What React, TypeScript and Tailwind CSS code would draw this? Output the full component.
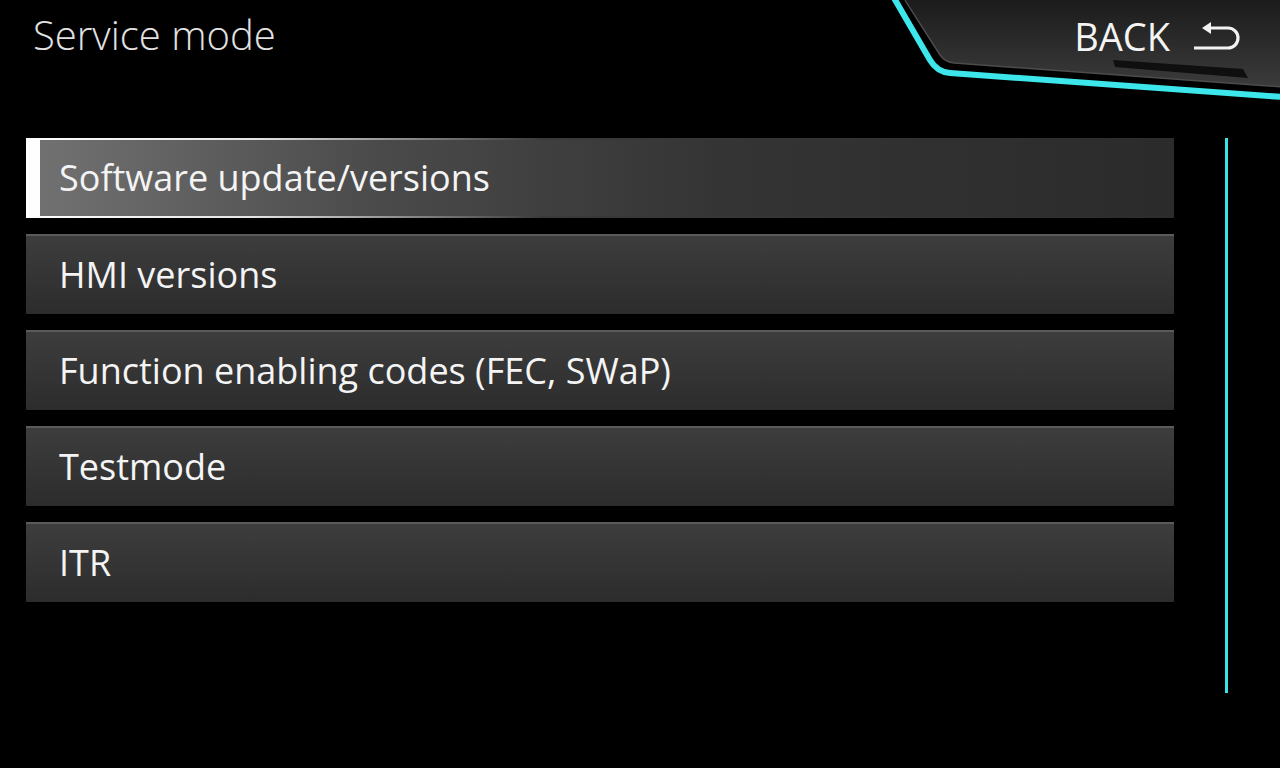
// iDrive service mode menu. Single screen, static list.
const items = [
  'Software update/versions',
  'HMI versions',
  'Function enabling codes (FEC, SWaP)',
  'Testmode',
  'ITR',
];

function BackIcon() {
  return (
    <svg width="48" height="32" viewBox="0 0 48 32" fill="none">
      <path d="M8 8 L17 2 L17 14 Z" fill="#f2f2f2" />
      <path
        d="M16 8 H34 A10 10 0 0 1 34 28 H1"
        stroke="#f2f2f2"
        strokeWidth="3.2"
        strokeLinecap="square"
      />
    </svg>
  );
}

function BackPanel() {
  return (
    <div className="relative w-[390px] h-[104px] shrink-0">
      <svg className="absolute inset-0" width="390" height="104" viewBox="0 0 390 104">
        <defs>
          <linearGradient id="panel" x1="0" y1="0" x2="0" y2="1">
            <stop offset="0" stopColor="#1b1b1b" />
            <stop offset="1" stopColor="#3b3b3b" />
          </linearGradient>
        </defs>
        <path d="M15 -2 L50 55 Q55 62 64 63 L392 87 L392 -2 Z" fill="url(#panel)" />
        <path d="M15 0 L50 55 Q55 62 64 63 L392 87" stroke="#4c4c4c" strokeWidth="1.5" fill="none" />
        <path d="M223 60 L353 69 L358 78 L225 67 Z" fill="#0f0f0f" />
        <path
          d="M4 -2 L40 60 Q47 72 60 73 L392 97"
          stroke="#3de6ea"
          strokeWidth="6"
          fill="none"
        />
      </svg>
      <div className="relative flex items-center justify-end gap-[24px] pr-[38px] pt-[13px]">
        <span className="text-[38px] leading-[46px] text-[#f4f4f4]">BACK</span>
        <BackIcon />
      </div>
    </div>
  );
}

function Row({ label, active }: { label: string; active: boolean }) {
  if (active) {
    return (
      <li className="h-[80px] pl-[14px] py-[2px] bg-[linear-gradient(to_right,#ffffff_0%,#e4e4e4_20%,#3a3a3a_45%,#2c2c2c_100%)]">
        <div className="h-full flex items-center pl-[19px] bg-[linear-gradient(to_right,#717171_0%,#4a4a4a_30%,#343434_60%,#2b2b2b_100%)]">
          <span className="text-[36px] text-[#f4f4f4]">{label}</span>
        </div>
      </li>
    );
  }
  return (
    <li className="h-[80px] flex items-center pl-[33px] border-t-2 border-[#5a5a5a] bg-[linear-gradient(to_bottom,#3d3d3d,#2c2c2c)]">
      <span className="text-[36px] text-[#f4f4f4]">{label}</span>
    </li>
  );
}

export default function App() {
  return (
    <div className="w-[1280px] h-[768px] bg-black overflow-hidden font-['Open_Sans',sans-serif]">
      <header className="flex justify-between h-[138px]">
        <h1 className="pl-[33px] pt-[10px] text-[40px] font-light text-[#e2e2e2] leading-[50px]">
          Service mode
        </h1>
        <BackPanel />
      </header>

      <main className="flex">
        <ul className="ml-[26px] w-[1148px] flex flex-col gap-4">
          {items.map((item, i) => (
            <Row key={item} label={item} active={i === 0} />
          ))}
        </ul>
        <div className="ml-[51px] w-[3px] h-[555px] bg-[#3de2e6]" />
      </main>
    </div>
  );
}
